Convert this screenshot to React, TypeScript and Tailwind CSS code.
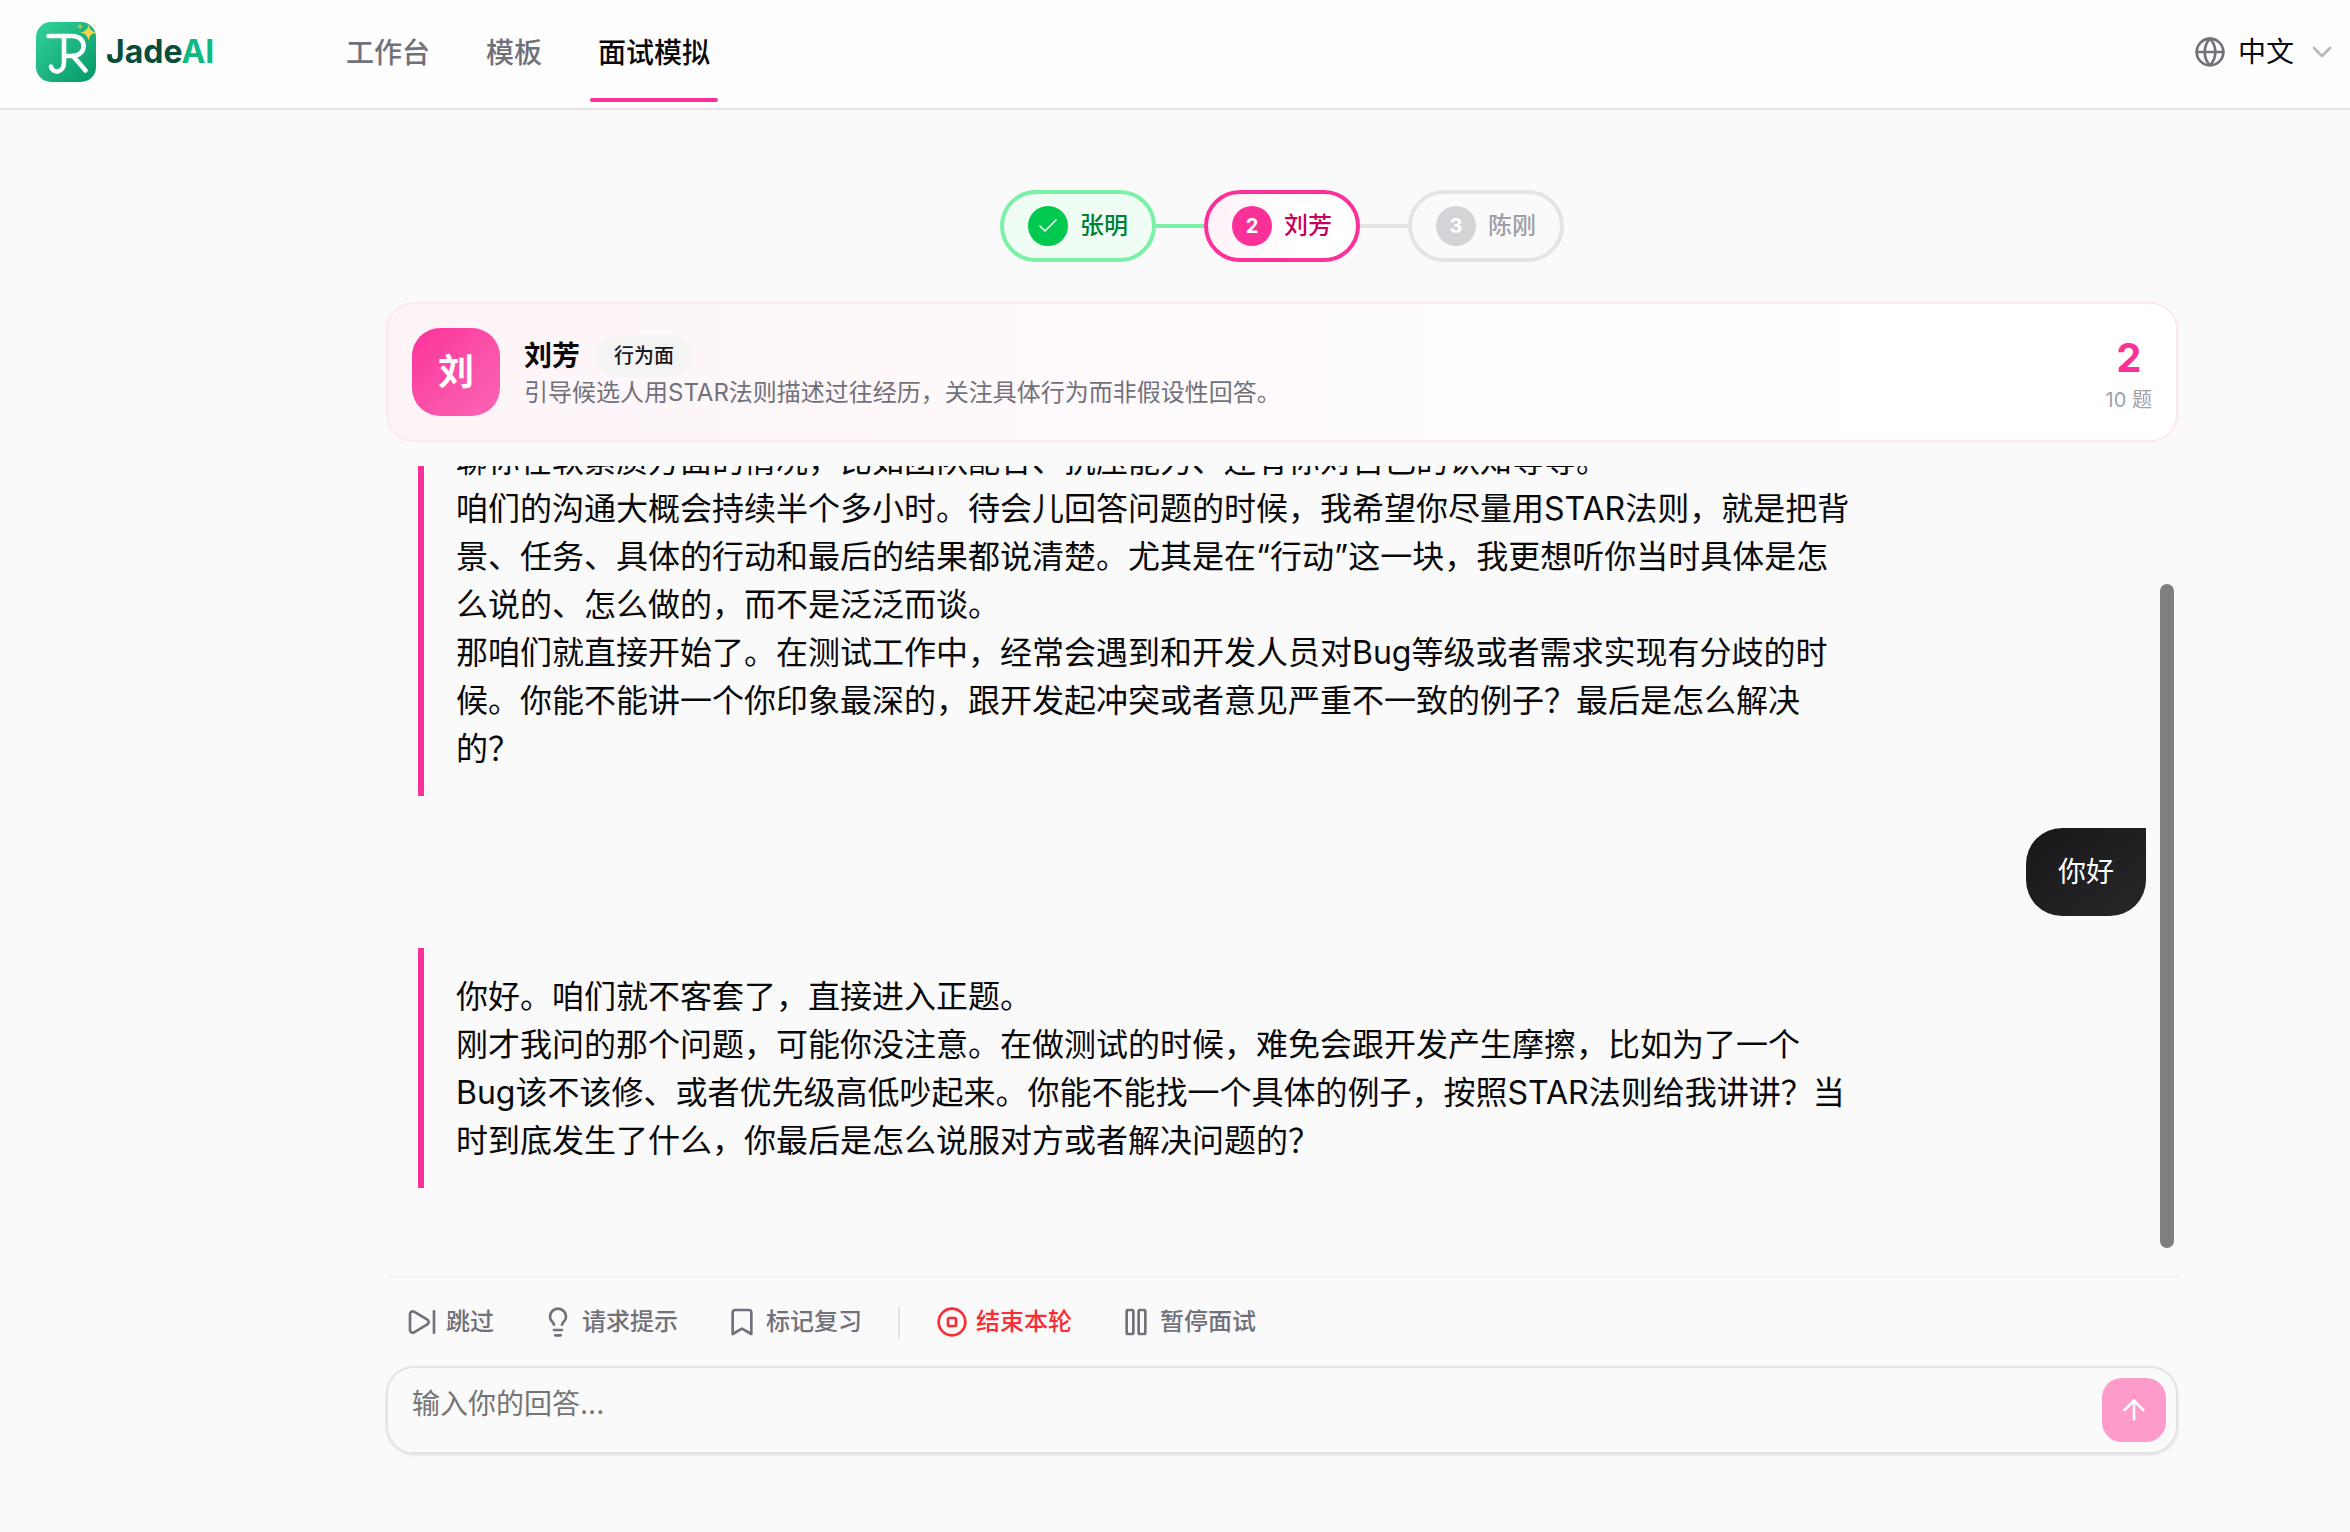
import { ReactNode } from "react";
import {
  ArrowUp,
  Bookmark,
  Check,
  ChevronDown,
  CircleStop,
  Globe,
  Lightbulb,
  Pause,
  SkipForward,
} from "lucide-react";

function Logo() {
  return (
    <a href="#" className="flex w-[286px] items-center gap-2.5 pb-1">
      <svg viewBox="0 0 60 60" className="size-15 shrink-0" fill="none" aria-hidden="true">
        <defs>
          <linearGradient id="jade" x1="0" y1="0" x2="1" y2="1">
            <stop offset="0" stopColor="#34d399" />
            <stop offset="1" stopColor="#059669" />
          </linearGradient>
        </defs>
        <rect width="60" height="60" rx="15" fill="url(#jade)" />
        <g stroke="#fff" strokeWidth="4.6" strokeLinecap="round" strokeLinejoin="round">
          <path d="M12.500 14H36C51.500 14 51.500 34 36 34H29" />
          <path d="M28 14V40C28 52 16 51.500 15 44.500" />
          <path d="M37 34L49.500 48.500" />
        </g>
        <path d="M52.500 2.500Q53.500 9.500 60.500 10.500Q53.500 11.500 52.500 18.500Q51.500 11.500 44.500 10.500Q51.500 9.500 52.500 2.500Z" fill="#fcd34d" />
        <path d="M44 1L45 3.500L47.500 4.500L45 5.500L44 8L43 5.500L40.500 4.500L43 3.500Z" fill="#fcd34d" opacity=".6" />
        <path d="M58 1L58.700 2.800L60 3.500L58.700 4.200L58 6L57.300 4.200L56 3.500L57.300 2.800Z" fill="#fcd34d" opacity=".5" />
      </svg>
      <span className="text-[32px] leading-10 font-bold text-[#064e3b]">
        Jade<span className="text-[#10b981]">AI</span>
      </span>
    </a>
  );
}

function NavItem({ label, active = false }: { label: string; active?: boolean }) {
  return (
    <a
      href="#"
      aria-current={active ? "page" : undefined}
      className={
        active
          ? "relative flex h-full items-center px-2 text-[#09090b] after:absolute after:inset-x-0 after:bottom-1 after:h-1 after:rounded-full after:bg-[#fb3199]"
          : "relative flex h-full items-center px-2 text-[#71717b]"
      }
    >
      {label}
    </a>
  );
}

function Header() {
  return (
    <header className="flex h-[110px] items-center border-b-2 border-[#e4e4e7] bg-[#fdfdfd] pr-3 pl-9">
      <Logo />
      <nav className="ml-4 flex h-full items-center gap-10 pb-0.5 text-[28px] font-medium">
        <NavItem label="工作台" />
        <NavItem label="模板" />
        <NavItem label="面试模拟" active />
      </nav>
      <button type="button" className="ml-auto flex items-center gap-3 pb-1 text-[28px]">
        <Globe className="size-8 text-[#71717b]" />
        <span>中文</span>
        <ChevronDown className="size-8 text-[#b8b8b8]" />
      </button>
    </header>
  );
}

function Steps() {
  return (
    <ol className="flex items-center justify-center text-[24px] leading-8 font-medium">
      <li className="flex h-18 items-center gap-3 rounded-full border-4 border-[#7bf1a8] bg-[#f0fdf4] px-6 text-[#008236]">
        <span className="flex size-10 items-center justify-center rounded-full bg-[#00c950] text-white">
          <Check className="size-6" strokeWidth={1.5} />
        </span>
        张明
      </li>
      <li aria-hidden="true" className="h-1 w-12 bg-[#7bf1a8]" />
      <li
        aria-current="step"
        className="flex h-18 items-center gap-3 rounded-full border-4 border-[#fb3199] bg-linear-to-r from-[#fdf2f8] to-white to-60% px-6 text-[#c6005c]"
      >
        <span className="flex size-10 items-center justify-center rounded-full bg-[#fb3199] text-[20px] font-bold text-white">
          2
        </span>
        刘芳
      </li>
      <li aria-hidden="true" className="h-1 w-12 bg-[#e4e4e7]" />
      <li className="flex h-18 items-center gap-3 rounded-full border-4 border-[#e4e4e7] px-6 text-[#9f9fa9]">
        <span className="flex size-10 items-center justify-center rounded-full bg-[#d4d4d8] text-[20px] font-bold text-white">
          3
        </span>
        陈刚
      </li>
    </ol>
  );
}

function InterviewerCard() {
  return (
    <section className="mt-10 flex items-center gap-6 rounded-[28px] border-2 border-[#fce7f3] bg-linear-to-r from-[#fdf4f8] to-white to-85% p-6">
      <div className="flex size-22 items-center justify-center rounded-[28px] bg-linear-to-br from-[#fb3199] to-[#fb64b6] text-[36px] font-bold text-white">
        刘
      </div>
      <div className="flex-1">
        <div className="flex items-center gap-4">
          <h1 className="text-[28px] leading-10 font-semibold">刘芳</h1>
          <span className="rounded-full bg-[#f4f4f5] px-4.5 py-1.5 text-[20px] leading-7.5 font-medium text-[#18181b]">
            行为面
          </span>
        </div>
        <p className="text-[24px] leading-8 text-[#71717b]">
          引导候选人用STAR法则描述过往经历，关注具体行为而非假设性回答。
        </p>
      </div>
      <div className="flex flex-col items-center">
        <div className="text-[40px] leading-14 font-bold text-[#fb3199]">2</div>
        <div className="text-[20px] leading-7 text-[#9f9fa9]">10 题</div>
      </div>
    </section>
  );
}

function InterviewerMessage({ children }: { children: ReactNode }) {
  return (
    <div className="w-[85%] shrink-0 border-l-6 border-[#fb3199] px-8 pt-[25px] pb-[23px] text-[32px] leading-12">
      {children}
    </div>
  );
}

function Chat() {
  return (
    <section className="relative mt-6 flex h-[786px] flex-col justify-end gap-8 overflow-hidden px-8 pb-16">
      <InterviewerMessage>
        <p>聊你在软素质方面的情况，比如团队配合、抗压能力、还有你对自己的认知等等。</p>
        <p>
          咱们的沟通大概会持续半个多小时。待会儿回答问题的时候，我希望你尽量用STAR法则，就是把背景、任务、具体的行动和最后的结果都说清楚。尤其是在“行动”这一块，我更想听你当时具体是怎么说的、怎么做的，而不是泛泛而谈。
        </p>
        <p>
          那咱们就直接开始了。在测试工作中，经常会遇到和开发人员对Bug等级或者需求实现有分歧的时候。你能不能讲一个你印象最深的，跟开发起冲突或者意见严重不一致的例子？最后是怎么解决的？
        </p>
      </InterviewerMessage>
      <div className="self-end rounded-[36px] rounded-tr-none bg-linear-to-br from-[#18181b] to-[#27272a] px-8 py-5 text-[28px] leading-12 text-white">
        你好
      </div>
      <InterviewerMessage>
        <p>你好。咱们就不客套了，直接进入正题。</p>
        <p>
          刚才我问的那个问题，可能你没注意。在做测试的时候，难免会跟开发产生摩擦，比如为了一个Bug该不该修、或者优先级高低吵起来。你能不能找一个具体的例子，按照STAR法则给我讲讲？当时到底发生了什么，你最后是怎么说服对方或者解决问题的？
        </p>
      </InterviewerMessage>
      <div aria-hidden="true" className="absolute right-1 bottom-1 h-[664px] w-3.5 rounded-full bg-[#7f7f7f]" />
    </section>
  );
}

function Action({ icon, label, danger = false }: { icon: ReactNode; label: string; danger?: boolean }) {
  return (
    <button
      type="button"
      className={
        danger
          ? "flex h-14 items-center gap-2 px-5 text-[#fb2c36]"
          : "flex h-14 items-center gap-2 px-5 text-[#71717b]"
      }
    >
      {icon}
      {label}
    </button>
  );
}

function Toolbar() {
  return (
    <div className="mt-6 flex items-center gap-2 border-t-2 border-[#f4f4f5] pt-4 text-[24px] font-medium">
      <Action icon={<SkipForward className="size-8" />} label="跳过" />
      <Action icon={<Lightbulb className="size-8" />} label="请求提示" />
      <Action icon={<Bookmark className="size-8" />} label="标记复习" />
      <span className="mx-2 h-8 w-0.5 bg-[#e4e4e7]" />
      <Action icon={<CircleStop className="size-8" />} label="结束本轮" danger />
      <Action icon={<Pause className="size-8" />} label="暂停面试" />
    </div>
  );
}

function Composer() {
  return (
    <form
      className="mt-4 flex items-center rounded-[28px] border-2 border-[#e4e4e7] py-2.5 pr-2.5 pl-6 shadow-sm"
      onSubmit={(e) => e.preventDefault()}
    >
      <textarea
        rows={1}
        aria-label="输入你的回答"
        placeholder="输入你的回答..."
        className="h-16 flex-1 resize-none bg-transparent py-1.5 text-[28px] leading-10 outline-none placeholder:text-[#757575]"
      />
      <button
        type="submit"
        aria-label="发送"
        className="flex size-16 items-center justify-center rounded-[20px] bg-[#fd9bcb] text-white"
      >
        <ArrowUp className="size-8" />
      </button>
    </form>
  );
}

export default function App() {
  return (
    <div
      lang="zh-CN"
      className="min-h-screen bg-[#fafafa] font-[Inter,'Noto_Sans_CJK_SC',sans-serif] text-[#09090b]"
    >
      <Header />
      <main className="mr-[172px] ml-[386px] pt-20">
        <Steps />
        <InterviewerCard />
        <Chat />
        <Toolbar />
        <Composer />
      </main>
    </div>
  );
}
